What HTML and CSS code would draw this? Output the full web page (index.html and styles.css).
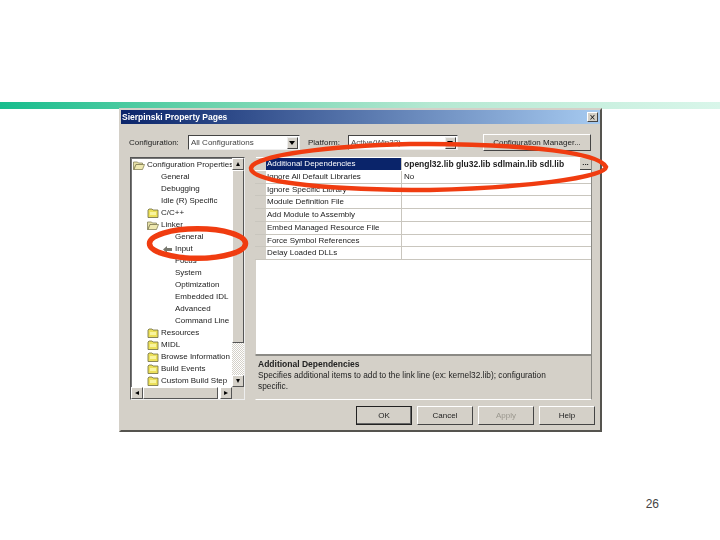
FILE: index.html
```html
<!DOCTYPE html>
<html lang="en">
<head>
<meta charset="utf-8">
<title>Sierpinski Property Pages</title>
<link rel="stylesheet" href="styles.css">
</head>
<body>
<svg width="0" height="0" class="defs">
  <symbol id="open" viewBox="0 0 12 10"><path d="M0.5 2h4l1 1h4v1.500H3L1 9.500H.5z" fill="#e8e2a8" stroke="#77724a" stroke-width=".7"/><path d="M3 4.500h8.500L9.500 9.500H1z" fill="#efe9b0" stroke="#77724a" stroke-width=".7"/></symbol>
  <symbol id="closed" viewBox="0 0 12 10"><path d="M1 2l1-1h3l1 1h5v7.500H1z" fill="#ece05a" stroke="#6f6c42" stroke-width=".8"/><path d="M3 4h6v3H3z" fill="#f8f4a0"/></symbol>
</svg>
<main class="slide">
  <div class="bar"></div>
  <section class="dialog">
    <header class="titlebar">
      <span class="title">Sierpinski Property Pages</span>
      <span class="close">×</span>
    </header>
    <div class="config">
      <span class="label label-config">Configuration:</span>
      <div class="select select-config"><span>All Configurations</span><i class="drop"></i></div>
      <span class="label label-platform">Platform:</span>
      <div class="select select-platform"><span>Active(Win32)</span><i class="drop"></i></div>
      <div class="btn btn-manager">Configuration Manager...</div>
    </div>
    <div class="main">
      <div class="tree">
        <div class="tree-list">
          <div class="node n0"><svg class="folder"><use href="#open"/></svg><span>Configuration Properties</span></div>
          <div class="node n1">General</div>
          <div class="node n1">Debugging</div>
          <div class="node n1">Idle (R) Specific</div>
          <div class="node n0b"><svg class="folder"><use href="#closed"/></svg><span>C/C++</span></div>
          <div class="node n0b"><svg class="folder"><use href="#open"/></svg><span>Linker</span></div>
          <div class="node n2">General</div>
          <div class="node n2 has-arrow"><svg class="arrow" viewBox="0 0 9 9"><path d="M0 4.500L4 1v2h5v3H4v2z" fill="#77786f"/></svg>Input</div>
          <div class="node n2">Focus</div>
          <div class="node n2">System</div>
          <div class="node n2">Optimization</div>
          <div class="node n2">Embedded IDL</div>
          <div class="node n2">Advanced</div>
          <div class="node n2">Command Line</div>
          <div class="node n0b"><svg class="folder"><use href="#closed"/></svg><span>Resources</span></div>
          <div class="node n0b"><svg class="folder"><use href="#closed"/></svg><span>MIDL</span></div>
          <div class="node n0b"><svg class="folder"><use href="#closed"/></svg><span>Browse Information</span></div>
          <div class="node n0b"><svg class="folder"><use href="#closed"/></svg><span>Build Events</span></div>
          <div class="node n0b"><svg class="folder"><use href="#closed"/></svg><span>Custom Build Step</span></div>
        </div>
        <div class="vscroll">
          <div class="sbtn">▴</div>
          <div class="thumb"></div>
          <div class="track"></div>
          <div class="sbtn">▾</div>
        </div>
        <div class="hscroll">
          <div class="sbtn">◂</div>
          <div class="hthumb"></div>
          <div class="sbtn">▸</div>
        </div>
      </div>
      <div class="props">
        <div class="grid">
          <div class="row selected"><div class="gut"></div><div class="name">Additional Dependencies</div><div class="value">opengl32.lib glu32.lib sdlmain.lib sdl.lib</div><div class="more">...</div></div>
          <div class="row"><div class="gut"></div><div class="name">Ignore All Default Libraries</div><div class="value">No</div></div>
          <div class="row"><div class="gut"></div><div class="name">Ignore Specific Library</div><div class="value"></div></div>
          <div class="row"><div class="gut"></div><div class="name">Module Definition File</div><div class="value"></div></div>
          <div class="row"><div class="gut"></div><div class="name">Add Module to Assembly</div><div class="value"></div></div>
          <div class="row"><div class="gut"></div><div class="name">Embed Managed Resource File</div><div class="value"></div></div>
          <div class="row"><div class="gut"></div><div class="name">Force Symbol References</div><div class="value"></div></div>
          <div class="row"><div class="gut"></div><div class="name">Delay Loaded DLLs</div><div class="value"></div></div>
        </div>
        <div class="desc">
          <div class="desc-title">Additional Dependencies</div>
          <div class="desc-text">Specifies additional items to add to the link line (ex: kernel32.lib); configuration specific.</div>
        </div>
      </div>
    </div>
    <div class="actions">
      <div class="btn action default">OK</div>
      <div class="btn action">Cancel</div>
      <div class="btn action disabled">Apply</div>
      <div class="btn action">Help</div>
    </div>
  </section>
  <div class="page">26</div>
  <svg class="marks" viewBox="0 0 720 540" aria-hidden="true">
    <path d="M251 168C254 155 330 146 410 144C500 143 598 150 606 167C605 178 520 188 430 190C340 190 250 184 251 168Z"/>
    <ellipse class="mark-small" cx="197.500" cy="243.500" rx="48" ry="14.800"/>
  </svg>
</main>
</body>
</html>
```
FILE: styles.css
```css
* { box-sizing: border-box; }
html, body { margin: 0; padding: 0; background: #fff; }
body { font-family: "Liberation Sans", Arial, sans-serif; }
.defs { position: absolute; }
.slide { position: relative; width: 720px; height: 540px; overflow: hidden; padding-top: 102px; }
.bar { height: 7px; background: linear-gradient(90deg, #17bd8d 0%, #6dd3ad 30%, #b5e8d2 60%, #d9f6ea 100%); }
.dialog {
  width: 483px; height: 324px; margin: -1px 0 0 119px;
  background: #d4d0c8; border: 2px solid; border-color: #d4d0c8 #55544f #55544f #d4d0c8;
  font-size: 8px; color: #222; filter: blur(.35px);
  display: flex; flex-direction: column;
}
.titlebar {
  height: 14px; flex: none; display: flex; align-items: center; justify-content: space-between;
  padding: 0 2px 0 1px;
  background: linear-gradient(90deg, #0a246a, #a6caf0);
}
.title { color: #fff; font-weight: bold; font-size: 8.500px; }
.close {
  width: 11px; height: 10px; background: #d4d0c8; color: #111; font-size: 10px; line-height: 9px; text-align: center;
  border: 1px solid; border-color: #fff #444 #444 #fff;
}
.config { display: flex; align-items: center; height: 17px; margin-top: 10px; padding-left: 8px; flex: none; }
.label { color: #222; }
.label-config { width: 59px; }
.label-platform { width: 40px; margin-left: 8px; }
.select {
  height: 15px; background: #fff; display: flex; align-items: center; justify-content: space-between;
  padding: 0 1px 0 2px; border: 1px solid; border-color: #444 #eee #eee #444;
}
.select-config { width: 112px; }
.select-platform { width: 110px; }
.select span { color: #444; white-space: nowrap; overflow: hidden; }
.drop {
  width: 11px; height: 12px; background: #d4d0c8; position: relative; flex: none;
  border: 1px solid; border-color: #eee #444 #444 #eee;
}
.drop::after {
  content: ""; position: absolute; left: 1px; top: 3px;
  border: 3px solid transparent; border-top: 4px solid #000; border-bottom: 0;
}
.btn {
  display: flex; align-items: center; justify-content: center; background: #d4d0c8; color: #222;
  border: 1px solid; border-color: #fff #444 #444 #fff;
}
.btn-manager { width: 108px; height: 17px; margin-left: 25px; }
.main { display: flex; gap: 10px; margin: 6px 0 0 9px; height: 243px; flex: none; }
.tree {
  width: 115px; height: 243px; display: grid; grid-template-columns: 1fr 12px; grid-template-rows: 1fr 12px;
  background: #fff; border: 1px solid; border-color: #555 #eee #eee #555; box-shadow: inset 1px 1px 0 #777;
}
.tree-list { overflow: hidden; padding: 1px 0 0 2px; }
.node { height: 12px; line-height: 12px; white-space: nowrap; color: #222; display: flex; align-items: center; gap: 2px; }
.n1 { padding-left: 28px; }
.n2 { padding-left: 42px; }
.n0b { padding-left: 14px; }
.has-arrow { padding-left: 30px; gap: 3px; }
.arrow { width: 9px; height: 9px; flex: none; }
.folder { width: 12px; height: 10px; flex: none; }
.vscroll { grid-row: 1 / 3; grid-column: 2; display: flex; flex-direction: column; background: #d4d0c8; padding-bottom: 12px; }
.sbtn {
  flex: none; width: 12px; height: 12px; font-size: 8px; line-height: 10px; text-align: center; color: #000; background: #d4d0c8;
  border: 1px solid; border-color: #fff #555 #555 #fff;
}
.thumb { height: 173px; background: #d4d0c8; border: 1px solid; border-color: #fff #555 #555 #fff; }
.track { flex: 1; background: repeating-conic-gradient(#d4d0c8 0 25%, #fff 0 50%) 0 0 / 2px 2px; }
.hscroll { grid-row: 2; grid-column: 1; display: flex; background: #fff; }
.hthumb { width: 75px; background: #d4d0c8; border: 1px solid; border-color: #fff #555 #555 #fff; margin-right: 2px; }
.props { width: 337px; height: 243px; display: flex; flex-direction: column; }
.grid { height: 198px; flex: none; background: #fff; border: 1px solid; border-color: #8b8a85 #8b8a85 #8b8a85 transparent; border-top: 0; padding-top: 1px; background-clip: padding-box; }
.row { display: flex; height: 12.750px; border-bottom: 1px solid #c9c6be; color: #222; align-items: center; margin-left: -1px; }
.gut { width: 11px; height: 100%; background: #d4d0c8; flex: none; }
.name { width: 136px; padding-left: 1px; white-space: nowrap; overflow: hidden; height: 100%; line-height: 12px; border-right: 1px solid #c9c6be; flex: none; }
.value { flex: 1; padding-left: 2px; white-space: nowrap; height: 100%; line-height: 12px; overflow: hidden; }
.selected { border-bottom-color: #fff; }
.selected .name { background: #0a246a; color: #fff; }
.selected .value { font-weight: bold; font-size: 8.500px; color: #222; }
.more { width: 11px; height: 100%; background: #d4d0c8; font-weight: bold; line-height: 10px; text-align: center; border-bottom: 1px solid #444; flex: none; }
.desc { height: 45px; flex: none; background: #d4d0c8; border: 1px solid; border-color: #8b8a85 #8b8a85 #fff #d4d0c8; padding: 3px 2px 0 2px; line-height: 11px; color: #222; }
.desc-title { font-weight: bold; font-size: 8.500px; color: #222; }
.desc-text { font-size: 8.300px; max-width: 300px; }
.actions { display: flex; justify-content: flex-end; gap: 5px; margin-top: 6px; padding-right: 5px; flex: none; }
.action { width: 56px; height: 19px; }
.default { border: 1px solid #222; box-shadow: inset -1px -1px 0 #666; }
.disabled { color: #9a978e; }
.page { position: absolute; right: 61px; top: 497px; font-size: 12px; color: #444; }
.marks { position: absolute; inset: 0; width: 720px; height: 540px; pointer-events: none; filter: blur(.3px); }
.marks path, .marks ellipse { fill: none; stroke: #f03c10; stroke-width: 4.500; }
.marks .mark-small { stroke-width: 5.500; }
```
